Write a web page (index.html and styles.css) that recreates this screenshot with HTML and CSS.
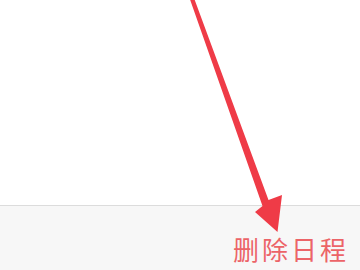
FILE: index.html
```html
<!DOCTYPE html>
<html lang="zh">
<head>
<meta charset="utf-8">
<link rel="stylesheet" href="styles.css">
</head>
<body>
<div class="page">
  <div class="content"></div>
  <div class="bar">
    <span class="action">删除日程</span>
  </div>
  <svg class="arrow" width="360" height="270" viewBox="0 0 360 270">
    <path d="M189.5,-2 L194,-2 L268.5,200 L282,195 L277.5,232 L255,212 L262.5,206 Z" fill="#ef3b47"/>
  </svg>
</div>
</body>
</html>
```
FILE: styles.css
```css
html, body {
  margin: 0;
  padding: 0;
  background: #ffffff;
}
.page {
  position: relative;
  width: 360px;
  height: 270px;
  overflow: hidden;
  display: flex;
  flex-direction: column;
}
.content {
  height: 205px;
  background: #ffffff;
  border-bottom: 1px solid #dcdcdc;
}
.bar {
  flex: 1;
  background: #f7f7f7;
  display: flex;
  justify-content: flex-end;
  align-items: flex-start;
  padding: 28px 11px 0 0;
}
.action {
  font-family: "Noto Sans CJK SC", "Noto Sans", sans-serif;
  font-size: 26px;
  line-height: 30px;
  letter-spacing: 3px;
  color: #ec6468;
}
.arrow {
  position: absolute;
  left: 0;
  top: 0;
}
```
